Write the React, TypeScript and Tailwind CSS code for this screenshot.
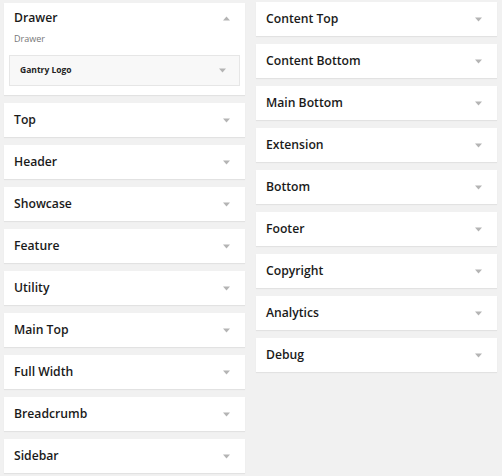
import { ReactNode } from "react";

const leftItems = [
  "Top",
  "Header",
  "Showcase",
  "Feature",
  "Utility",
  "Main Top",
  "Full Width",
  "Breadcrumb",
  "Sidebar",
];

const rightItems = [
  "Content Top",
  "Content Bottom",
  "Main Bottom",
  "Extension",
  "Bottom",
  "Footer",
  "Copyright",
  "Analytics",
  "Debug",
];

function Caret({ up = false }: { up?: boolean }) {
  return (
    <svg width="7" height="5" viewBox="0 0 7 5" className="shrink-0">
      <path d={up ? "M0 4.5 L3.5 0.5 L7 4.5 Z" : "M0 0.5 L7 0.5 L3.5 4.5 Z"} fill="#b4b4b4" />
    </svg>
  );
}

function Card({ children, className = "" }: { children: ReactNode; className?: string }) {
  return (
    <div className={`bg-white shadow-[0_1px_1px_rgba(0,0,0,0.06)] ${className}`}>{children}</div>
  );
}

function Row({ label }: { label: string }) {
  // collapsed widget area row
  return (
    <Card className="flex h-[34px] items-center justify-between pl-[10px] pr-[15px]">
      <span className="text-[12.2px] font-semibold text-[#1a1a1a]">{label}</span>
      <Caret />
    </Card>
  );
}

export default function App() {
  return (
    <div
      className="h-[476px] w-[502px] overflow-hidden bg-[#f1f1f1]"
      style={{ fontFamily: '"Open Sans", "Noto Sans", sans-serif' }}
    >
      <div className="flex gap-[11px] pl-[4px]">
        <div className="flex w-[241px] flex-col gap-[8px] pt-[3px]">
          <Card className="h-[92px] px-[5px] pt-[6px]">
            <div className="flex items-center justify-between pl-[5px] pr-[10px]">
              <span className="text-[12.2px] font-semibold text-[#1a1a1a]">Drawer</span>
              <Caret up />
            </div>
            <div className="mt-[5px] pl-[5px] text-[9px] text-[#777]">Drawer</div>
            <div className="mt-[9px] flex h-[31px] items-center justify-between border border-[#e6e6e6] bg-[#f8f8f8] pl-[10px] pr-[13px]">
              <span className="text-[8.5px] font-bold text-[#222]">Gantry Logo</span>
              <Caret />
            </div>
          </Card>
          {leftItems.map((item) => (
            <Row key={item} label={item} />
          ))}
        </div>
        <div className="flex w-[241px] flex-col gap-[8px] pt-[2px]">
          {rightItems.map((item) => (
            <Row key={item} label={item} />
          ))}
        </div>
      </div>
    </div>
  );
}
